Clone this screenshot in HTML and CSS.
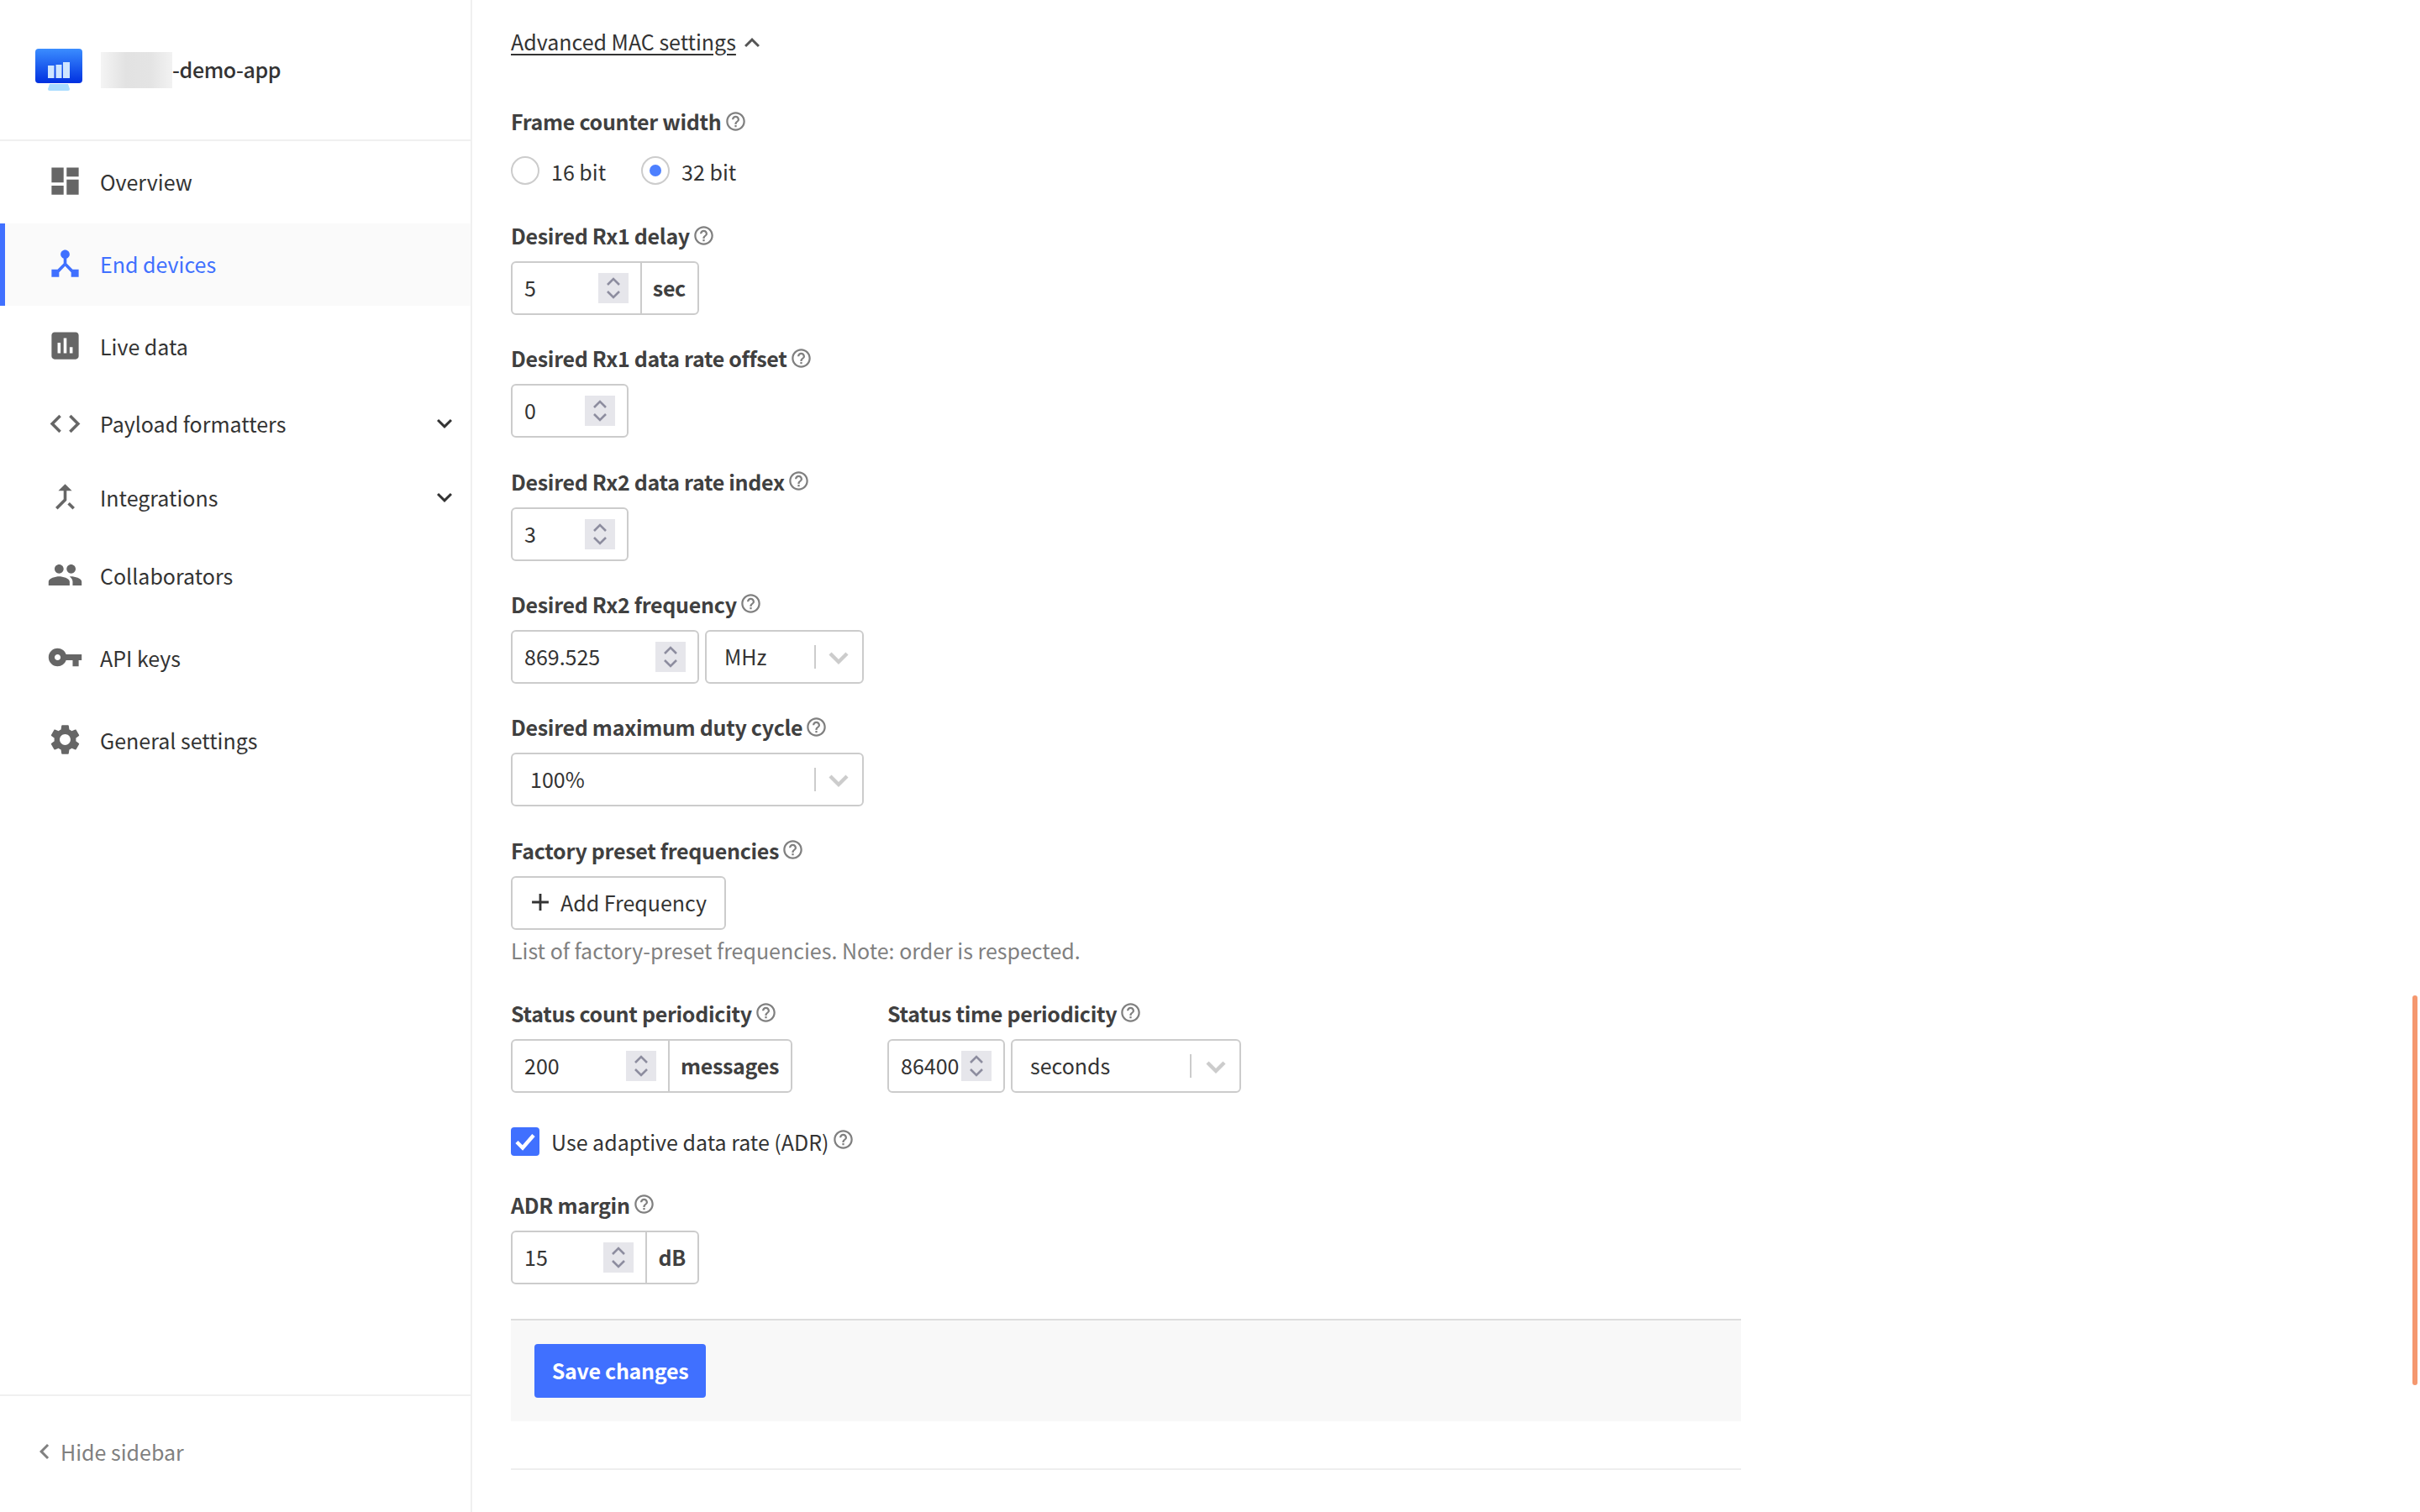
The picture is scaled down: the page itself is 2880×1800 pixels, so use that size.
FILE: index.html
```html
<!DOCTYPE html>
<html lang="en">
<head>
    <meta charset="UTF-8">
    <meta name="viewport" content="width=device-width, initial-scale=1.0">
    <title>End devices</title>
    <link rel="stylesheet" href="styles.css">
</head>
<body>
    <svg class="sprite" aria-hidden="true">
        <symbol id="i-dashboard" viewBox="0 0 24 24"><path d="M3 13h8V3H3v10zm0 8h8v-6H3v6zm10 0h8V11h-8v10zm0-18v6h8V3h-8z"/></symbol>
        <symbol id="i-hub" viewBox="0 0 24 24"><path d="M17 16l-4-4V8.82C14.16 8.4 15 7.3 15 6c0-1.66-1.34-3-3-3S9 4.34 9 6c0 1.3.84 2.4 2 2.82V12l-4 4H3v5h5v-3.05l4-4.2 4 4.2V21h5v-5h-4z"/></symbol>
        <symbol id="i-chart" viewBox="0 0 24 24"><path d="M19 3H5c-1.1 0-2 .9-2 2v14c0 1.1.9 2 2 2h14c1.1 0 2-.9 2-2V5c0-1.1-.9-2-2-2zM9 17H7v-7h2v7zm4 0h-2V7h2v10zm4 0h-2v-4h2v4z"/></symbol>
        <symbol id="i-code" viewBox="0 0 24 24"><path d="M9.4 16.6L4.8 12l4.6-4.6L8 6l-6 6 6 6 1.4-1.4zm5.2 0l4.6-4.6-4.6-4.6L16 6l6 6-6 6-1.4-1.4z"/></symbol>
        <symbol id="i-merge" viewBox="0 0 24 24"><path d="M17 20.41L18.41 19 15 15.59 13.59 17 17 20.41zM7.5 8H11v5.59L5.59 19 7 20.41l6-6V8h3.5L12 3.5 7.5 8z"/></symbol>
        <symbol id="i-people" viewBox="0 0 24 24"><path d="M16 11c1.66 0 2.99-1.34 2.99-3S17.66 5 16 5c-1.66 0-3 1.34-3 3s1.34 3 3 3zm-8 0c1.66 0 2.99-1.34 2.99-3S9.66 5 8 5C6.34 5 5 6.34 5 8s1.34 3 3 3zm0 2c-2.33 0-7 1.17-7 3.5V19h14v-2.5c0-2.33-4.67-3.5-7-3.5zm8 0c-.29 0-.62.02-.97.05 1.16.84 1.97 1.97 1.97 3.45V19h6v-2.5c0-2.33-4.67-3.5-7-3.5z"/></symbol>
        <symbol id="i-key" viewBox="0 0 24 24"><path d="M12.65 10C11.83 7.67 9.61 6 7 6c-3.31 0-6 2.69-6 6s2.69 6 6 6c2.61 0 4.83-1.67 5.65-4H17v4h4v-4h2v-4H12.65zM7 14c-1.1 0-2-.9-2-2s.9-2 2-2 2 .9 2 2-.9 2-2 2z"/></symbol>
        <symbol id="i-gear" viewBox="0 0 24 24"><path d="M19.14 12.94c.04-.3.06-.61.06-.94 0-.32-.02-.64-.07-.94l2.03-1.58c.18-.14.23-.41.12-.61l-1.92-3.32c-.12-.22-.37-.29-.59-.22l-2.39.96c-.5-.38-1.03-.7-1.62-.94l-.36-2.54c-.04-.24-.24-.41-.48-.41h-3.84c-.24 0-.43.17-.47.41l-.36 2.54c-.59.24-1.13.57-1.62.94l-2.39-.96c-.22-.08-.47 0-.59.22L2.74 8.87c-.12.21-.08.47.12.61l2.03 1.58c-.05.3-.09.63-.09.94s.02.64.07.94l-2.03 1.58c-.18.14-.23.41-.12.61l1.92 3.32c.12.22.37.29.59.22l2.39-.96c.5.38 1.03.7 1.62.94l.36 2.54c.05.24.24.41.48.41h3.84c.24 0 .44-.17.47-.41l.36-2.54c.59-.24 1.13-.56 1.62-.94l2.39.96c.22.08.47 0 .59-.22l1.92-3.32c.12-.22.07-.47-.12-.61l-2.01-1.58zM12 15.6c-1.98 0-3.6-1.62-3.6-3.6s1.62-3.6 3.6-3.6 3.6 1.62 3.6 3.6-1.62 3.6-3.6 3.6z"/></symbol>
        <symbol id="i-down" viewBox="0 0 24 24"><path d="M7.41 8.59L12 13.17l4.59-4.58L18 10l-6 6-6-6 1.41-1.41z"/></symbol>
        <symbol id="i-up" viewBox="0 0 24 24"><path d="M7.41 15.41L12 10.83l4.59 4.58L18 14l-6-6-6 6z"/></symbol>
        <symbol id="i-left" viewBox="0 0 24 24"><path d="M15.41 16.59L10.83 12l4.58-4.59L14 6l-6 6 6 6 1.41-1.41z"/></symbol>
        <symbol id="i-help" viewBox="0 0 24 24"><path d="M11 18h2v-2h-2v2zm1-16C6.48 2 2 6.48 2 12s4.48 10 10 10 10-4.48 10-10S17.52 2 12 2zm0 18c-4.41 0-8-3.59-8-8s3.59-8 8-8 8 3.59 8 8-3.59 8-8 8zm0-14c-2.21 0-4 1.79-4 4h2c0-1.1.9-2 2-2s2 .9 2 2c0 2-3 1.75-3 5h2c0-2.25 3-2.5 3-5 0-2.21-1.79-4-4-4z"/></symbol>
        <symbol id="i-plus" viewBox="0 0 24 24"><path d="M19 13h-6v6h-2v-6H5v-2h6V5h2v6h6v2z"/></symbol>
        <symbol id="i-spin" viewBox="0 0 36 36"><path d="M11 14l7-7 7 7M11 22l7 7 7-7" fill="none" stroke="currentColor" stroke-width="2.6"/></symbol>
        <symbol id="i-select" viewBox="0 0 24 18"><path d="M2 4l10 10L22 4" fill="none" stroke="currentColor" stroke-width="4.4"/></symbol>
    </svg>

    <aside class="sidebar">
        <div class="app-head">
            <svg class="app-logo" viewBox="0 0 56 50">
                <defs>
                    <linearGradient id="logoFill" x1="0" y1="0" x2="0" y2="1">
                        <stop offset="0" stop-color="#3b8dff"/>
                        <stop offset="1" stop-color="#0030e0"/>
                    </linearGradient>
                </defs>
                <path d="M17 42h22l2 6a2 2 0 0 1-2 2H17a2 2 0 0 1-2-2z" fill="#a9dcff"/>
                <rect width="56" height="41" rx="4" fill="url(#logoFill)"/>
                <rect x="15" y="20" width="7.5" height="15" fill="#cfe6ff"/>
                <rect x="24.5" y="19" width="7" height="16" fill="#cfe6ff"/>
                <rect x="33" y="16" width="8" height="19" fill="#cfe6ff"/>
            </svg>
            <span class="app-blur"></span>
            <span class="app-name">-demo-app</span>
        </div>
        <nav class="nav">
            <a class="nav-item"><svg class="nav-icon"><use href="#i-dashboard"/></svg>Overview</a>
            <a class="nav-item active"><svg class="nav-icon"><use href="#i-hub"/></svg>End devices</a>
            <a class="nav-item"><svg class="nav-icon"><use href="#i-chart"/></svg>Live data</a>
            <a class="nav-item short"><svg class="nav-icon"><use href="#i-code"/></svg>Payload formatters<svg class="nav-arrow"><use href="#i-down"/></svg></a>
            <a class="nav-item short"><svg class="nav-icon"><use href="#i-merge"/></svg>Integrations<svg class="nav-arrow"><use href="#i-down"/></svg></a>
            <a class="nav-item"><svg class="nav-icon"><use href="#i-people"/></svg>Collaborators</a>
            <a class="nav-item"><svg class="nav-icon"><use href="#i-key"/></svg>API keys</a>
            <a class="nav-item"><svg class="nav-icon"><use href="#i-gear"/></svg>General settings</a>
        </nav>
        <div class="hide-bar"><svg class="hide-icon"><use href="#i-left"/></svg>Hide sidebar</div>
    </aside>

    <main class="main">
        <form class="form">
            <div class="advanced"><span class="advanced-link">Advanced MAC settings</span><svg class="advanced-icon"><use href="#i-up"/></svg></div>

            <div class="field field-radio">
                <div class="label">Frame counter width<svg class="help"><use href="#i-help"/></svg></div>
                <div class="radios">
                    <label class="radio"><span class="radio-dot"></span><span class="radio-text">16 bit</span></label>
                    <label class="radio"><span class="radio-dot on"></span><span class="radio-text">32 bit</span></label>
                </div>
            </div>

            <div class="field">
                <div class="label">Desired Rx1 delay<svg class="help"><use href="#i-help"/></svg></div>
                <div class="box w224">
                    <span class="value">5</span>
                    <span class="spin"><svg><use href="#i-spin"/></svg></span>
                    <span class="unit">sec</span>
                </div>
            </div>

            <div class="field">
                <div class="label">Desired Rx1 data rate offset<svg class="help"><use href="#i-help"/></svg></div>
                <div class="box w140">
                    <span class="value">0</span>
                    <span class="spin"><svg><use href="#i-spin"/></svg></span>
                </div>
            </div>

            <div class="field">
                <div class="label">Desired Rx2 data rate index<svg class="help"><use href="#i-help"/></svg></div>
                <div class="box w140">
                    <span class="value">3</span>
                    <span class="spin"><svg><use href="#i-spin"/></svg></span>
                </div>
            </div>

            <div class="field">
                <div class="label">Desired Rx2 frequency<svg class="help"><use href="#i-help"/></svg></div>
                <div class="row">
                    <div class="box w224">
                        <span class="value">869.525</span>
                        <span class="spin"><svg><use href="#i-spin"/></svg></span>
                    </div>
                    <div class="select w189">
                        <span class="select-text">MHz</span>
                        <span class="select-sep"></span>
                        <svg class="select-arrow"><use href="#i-select"/></svg>
                    </div>
                </div>
            </div>

            <div class="field">
                <div class="label">Desired maximum duty cycle<svg class="help"><use href="#i-help"/></svg></div>
                <div class="select w420">
                    <span class="select-text">100%</span>
                    <span class="select-sep"></span>
                    <svg class="select-arrow"><use href="#i-select"/></svg>
                </div>
            </div>

            <div class="field field-preset">
                <div class="label">Factory preset frequencies<svg class="help"><use href="#i-help"/></svg></div>
                <button type="button" class="add-btn"><svg class="add-icon"><use href="#i-plus"/></svg>Add Frequency</button>
                <p class="hint">List of factory-preset frequencies. Note: order is respected.</p>
            </div>

            <div class="field field-status">
                <div class="status-col">
                    <div class="label">Status count periodicity<svg class="help"><use href="#i-help"/></svg></div>
                    <div class="box w335">
                        <span class="value">200</span>
                        <span class="spin"><svg><use href="#i-spin"/></svg></span>
                        <span class="unit">messages</span>
                    </div>
                </div>
                <div class="status-col">
                    <div class="label">Status time periodicity<svg class="help"><use href="#i-help"/></svg></div>
                    <div class="row">
                        <div class="box w140">
                            <span class="value">86400</span>
                            <span class="spin"><svg><use href="#i-spin"/></svg></span>
                        </div>
                        <div class="select w274">
                            <span class="select-text">seconds</span>
                            <span class="select-sep"></span>
                            <svg class="select-arrow"><use href="#i-select"/></svg>
                        </div>
                    </div>
                </div>
            </div>

            <label class="check">
                <span class="check-box"><svg viewBox="0 0 34 34"><path d="M7 17.5l7 7L27 9.5" fill="none" stroke="#fff" stroke-width="4.5"/></svg></span>
                Use adaptive data rate (ADR)<svg class="help raised"><use href="#i-help"/></svg>
            </label>

            <div class="field">
                <div class="label">ADR margin<svg class="help"><use href="#i-help"/></svg></div>
                <div class="box w224">
                    <span class="value">15</span>
                    <span class="spin"><svg><use href="#i-spin"/></svg></span>
                    <span class="unit">dB</span>
                </div>
            </div>

            <div class="submit-bar">
                <button type="button" class="save-btn">Save changes</button>
            </div>
            <hr class="end-line">
        </form>
    </main>

    <div class="scroll-thumb"></div>
</body>
</html>
```

FILE: styles.css
```css
* {
    box-sizing: border-box;
}
html, body {
    height: 1800px;
    margin: 0;
    overflow: hidden;
}
body {
    display: flex;
    font-family: "Noto Sans CJK JP", "Noto Sans", sans-serif;
    font-size: 25px;
    line-height: 32px;
    color: #333;
    background-color: #fff;
}
.sprite {
    display: none;
}
svg {
    fill: currentColor;
}

/* sidebar */
.sidebar {
    width: 562px;
    height: 1800px;
    flex: none;
    display: flex;
    flex-direction: column;
    border-right: 2px solid #f0f0f0;
}
.app-head {
    height: 168px;
    display: flex;
    align-items: center;
    padding-left: 42px;
    border-bottom: 2px solid #f0f0f0;
}
.app-logo {
    width: 56px;
    height: 50px;
    margin-right: 22px;
}
.app-blur {
    width: 85px;
    height: 43px;
    background: linear-gradient(90deg, #f4f4f4, #e2e2e2 35%, #e4e4e4 70%, #f2f2f2);
}
.app-name {
    padding-bottom: 2px;
    font-weight: 500;
    letter-spacing: -0.4px;
}
.nav {
    flex: 1;
}
.nav-item {
    height: 98px;
    display: flex;
    align-items: center;
    padding: 0 0 3px 56px;
    color: #333;
}
.nav-item.short {
    height: 87.5px;
}
.nav-item.active {
    background-color: #fafafa;
    box-shadow: inset 6px 0 0 #4070ff;
    color: #4070ff;
}
.nav-icon {
    width: 43px;
    height: 43px;
    margin-right: 20px;
    color: #666;
}
.active .nav-icon {
    color: #4070ff;
}
.nav-arrow {
    width: 36px;
    height: 36px;
    margin-left: auto;
    margin-right: 13px;
    color: #333;
}
.hide-bar {
    height: 140px;
    display: flex;
    align-items: center;
    padding: 0 0 6px 35px;
    border-top: 2px solid #f0f0f0;
    color: #808080;
}
.hide-icon {
    width: 36px;
    height: 36px;
    margin-right: 1px;
}

/* main form */
.main {
    flex: 1;
    padding: 32px 0 0 46px;
}
.form {
    width: 1464px;
}
.advanced {
    display: flex;
    align-items: center;
    height: 36px;
    padding-bottom: 2px;
    margin-bottom: 61px;
}
.advanced-link {
    text-decoration: underline;
    text-underline-offset: 4px;
}
.advanced-icon {
    width: 36px;
    height: 36px;
    margin-left: 1px;
    margin-top: 4px;
    color: #555;
}
.field {
    margin-bottom: 36.33px;
}
.field-radio {
    margin-bottom: 45px;
}
.field-preset {
    margin-bottom: 44px;
}
.label {
    display: flex;
    align-items: center;
    height: 32px;
    padding-bottom: 2px;
    margin-bottom: 14px;
    font-weight: 700;
    letter-spacing: -0.3px;
    color: #404040;
}
.help {
    width: 27px;
    height: 27px;
    margin-left: 3px;
    color: #808080;
    flex: none;
}
.help.raised {
    margin-top: -5px;
}
.radios {
    display: flex;
    gap: 42px;
    margin-top: 25px;
}
.radio {
    display: flex;
    align-items: center;
    height: 34px;
}
.radio-dot {
    width: 34px;
    height: 34px;
    margin-right: 14px;
    border: 2px solid #ccc;
    border-radius: 50%;
    display: flex;
    align-items: center;
    justify-content: center;
}
.radio-dot.on::after {
    content: "";
    width: 14px;
    height: 14px;
    border-radius: 50%;
    background-color: #4d80ff;
}
.radio-text {
    margin-top: 2px;
}
.row {
    display: flex;
    gap: 7px;
}

/* number inputs */
.box {
    height: 64px;
    display: flex;
    align-items: center;
    border: 2px solid #ccc;
    border-radius: 6px;
}
.w140 {
    width: 140px;
}
.w224 {
    width: 224px;
}
.w335 {
    width: 335px;
}
.value {
    flex: 1;
    padding: 0 0 2px 14px;
}
.spin {
    width: 36px;
    height: 36px;
    margin-right: 14px;
    background-color: #e6e6eb;
    color: #8d8d9f;
}
.spin svg {
    display: block;
    width: 36px;
    height: 36px;
}
.unit {
    height: 60px;
    line-height: 58px;
    padding: 0 14px 0 13px;
    border-left: 2px solid #ccc;
    font-weight: 700;
    letter-spacing: -0.3px;
    color: #404040;
}

/* selects */
.select {
    height: 64px;
    display: flex;
    align-items: center;
    border: 2px solid #ccc;
    border-radius: 6px;
}
.w189 {
    width: 189px;
}
.w274 {
    width: 274px;
}
.w420 {
    width: 420px;
}
.select-text {
    flex: 1;
    padding: 0 0 2px 21px;
}
.select-sep {
    width: 2px;
    height: 28px;
    background-color: #ccc;
}
.select-arrow {
    width: 24px;
    height: 18px;
    margin: 2px 16px 0 15px;
    color: #ccc;
}
.w274 .select-arrow {
    margin-left: 17px;
}

/* add frequency */
.add-btn {
    display: flex;
    align-items: center;
    width: 256px;
    height: 64px;
    padding: 0 0 2px 16px;
    background-color: #fff;
    border: 2px solid #ccc;
    border-radius: 6px;
    font: inherit;
    color: #333;
}
.add-icon {
    width: 34px;
    height: 34px;
    margin-right: 7px;
}
.hint {
    margin: 8px 0 0;
    color: #808080;
}
.field-status {
    display: flex;
    gap: 113px;
    margin-bottom: 41px;
}

/* checkbox */
.check {
    display: flex;
    align-items: center;
    height: 34px;
    margin-bottom: 43px;
}
.check-box {
    width: 34px;
    height: 34px;
    margin-right: 14px;
    border-radius: 4px;
    background-color: #4070ff;
}
.check-box svg {
    display: block;
}

/* footer of the form */
.submit-bar {
    height: 122px;
    padding: 28px;
    margin-top: 41px;
    background-color: #f8f8f8;
    border-top: 2px solid #ddd;
}
.save-btn {
    display: block;
    width: 204px;
    height: 64px;
    padding-bottom: 2px;
    border: none;
    border-radius: 4px;
    background-color: #4070ff;
    color: #fff;
    font: inherit;
    font-weight: 700;
    letter-spacing: -0.3px;
}
.end-line {
    height: 2px;
    margin: 56px 0 0;
    border: none;
    background-color: #eee;
}
.scroll-thumb {
    position: fixed;
    left: 2871px;
    top: 1185px;
    width: 6px;
    height: 464px;
    border-radius: 3px;
    background-color: #f5986f;
}
```
